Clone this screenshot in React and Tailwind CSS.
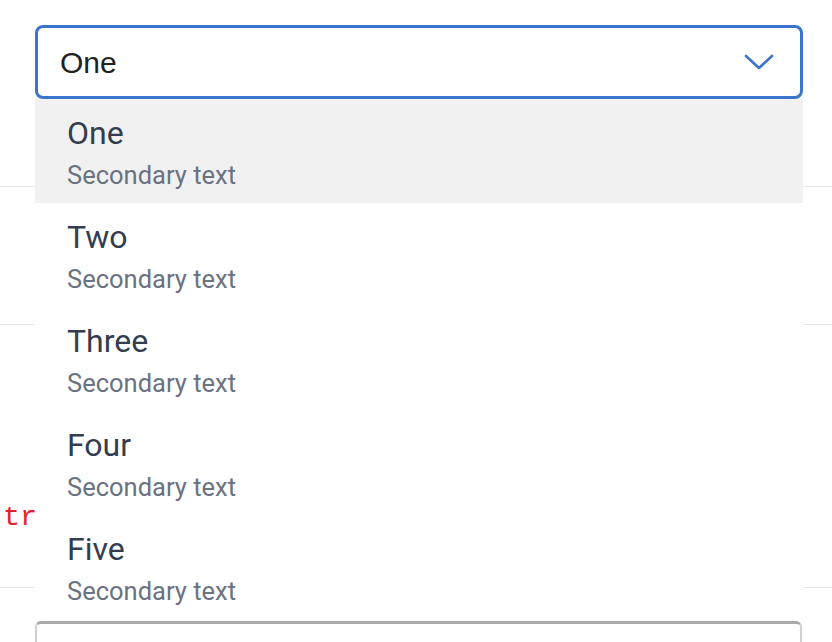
const options = ['One', 'Two', 'Three', 'Four', 'Five'];

function Chevron() {
  return (
    <svg width="30" height="16" viewBox="0 0 30 16" fill="none">
      <polyline points="2,2 15,14 28,2" stroke="#3a74cc" strokeWidth="2.6" strokeLinecap="round" strokeLinejoin="round" />
    </svg>
  );
}

export default function App() {
  const selected = 'One';

  return (
    <div className="relative w-[832px] h-[642px] overflow-hidden bg-white font-['Roboto',sans-serif]">
      {/* Select trigger */}
      <div className="pt-[25px] px-[35px]">
        <div className="h-[74px] w-[768px] flex items-center justify-between border-[3px] border-[#3a74cc] rounded-lg pl-[22px] pr-[26px]">
          <span className="text-[30px] text-[#222] font-['Liberation_Sans',sans-serif]">{selected}</span>
          <Chevron />
        </div>
      </div>

      {/* Table rows behind */}
      <div className="h-[88px] border-b border-[#e5e7eb]" />
      <div className="h-[138px] border-b border-[#e5e7eb]" />
      <div className="h-[263px] border-b border-[#e5e7eb] pt-[177px]">
        <span className="pl-[3px] text-[28.5px] leading-[32px] text-[#e1242c] font-['Liberation_Mono',monospace]">tr</span>
      </div>

      {/* Next field */}
      <div className="mt-[33px] ml-[35px] w-[767px] h-[60px] rounded-md border-2 border-[#d0d0d0] border-t-[3px] border-t-[#a9a9a9]" />

      {/* Dropdown menu */}
      <ul className="absolute top-[99px] left-[35px] w-[768px] bg-white">
        {options.map((opt) => (
          <li
            key={opt}
            className={`h-[104px] px-[32px] pt-[16px] ${opt === selected ? 'bg-[#f1f1f1]' : 'bg-white'}`}
          >
            <div className="text-[32px] leading-[36px] text-[#333d4f]">{opt}</div>
            <div className="mt-[9px] text-[25.5px] leading-[30px] text-[#6b7280]">Secondary text</div>
          </li>
        ))}
      </ul>
    </div>
  );
}
